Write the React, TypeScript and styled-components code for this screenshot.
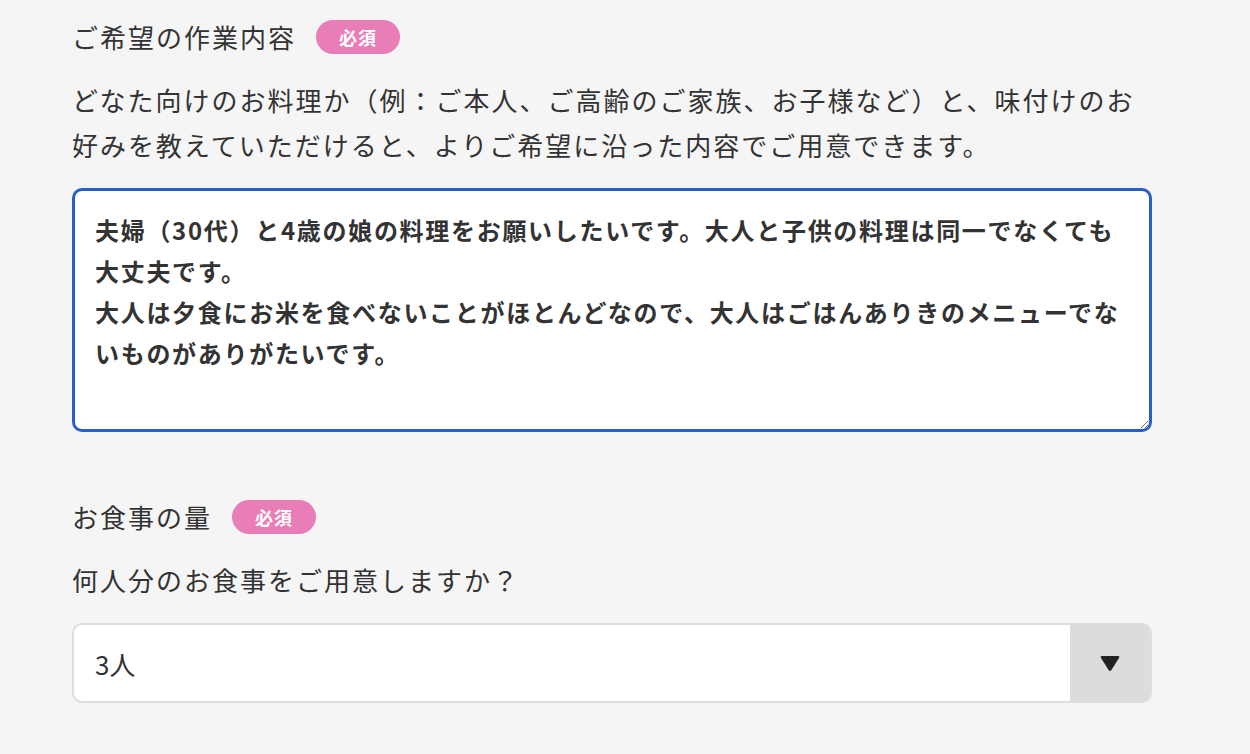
import { createGlobalStyle } from "styled-components";
import styled from "styled-components";

const GlobalStyle = createGlobalStyle`
    html, body {
        margin: 0;
        padding: 0;
        background: #f5f5f5;
    }
    body {
        font-family: "Noto Sans CJK JP", "Noto Sans", sans-serif;
        color: #333;
    }
`;

const Page = styled.div`
    padding: 20px 0 0 72px;
    width: 1080px;
    min-height: 734px;
`;

const Field = styled.section`
    display: flex;
    flex-direction: column;

    & + & {
        margin-top: 68px;
    }
`;

const LabelRow = styled.div`
    display: flex;
    align-items: center;
    gap: 20px;
    height: 34px;
`;

const Label = styled.h2`
    margin: 0;
    font-size: 26px;
    font-weight: 400;
    letter-spacing: 2px;
    line-height: 34px;
    color: #333;
`;

const Badge = styled.span`
    display: inline-flex;
    align-items: center;
    justify-content: center;
    width: 84px;
    height: 34px;
    border-radius: 17px;
    background: #e87db7;
    color: #fff;
    font-size: 18px;
    font-weight: 700;
    letter-spacing: 1px;
`;

const Description = styled.p`
    margin: 23px 0 21px;
    font-size: 26px;
    letter-spacing: 2px;
    line-height: 45px;
    color: #333;
`;

const TextArea = styled.textarea`
    box-sizing: border-box;
    width: 1080px;
    height: 244px;
    margin: 0;
    padding: 18px 20px;
    border: 3px solid #2a5ec6;
    border-radius: 10px;
    background: #fff;
    font-family: "Noto Sans CJK JP", "Noto Sans", sans-serif;
    font-size: 24px;
    font-weight: 700;
    letter-spacing: 1.7px;
    line-height: 41px;
    color: #333;
    outline: none;
    resize: vertical;
`;

const SelectBox = styled.div`
    box-sizing: border-box;
    display: flex;
    width: 1080px;
    height: 80px;
    border: 2px solid #dedede;
    border-radius: 10px;
    overflow: hidden;
    background: #fff;
`;

const Select = styled.select`
    flex: 1;
    appearance: none;
    border: none;
    outline: none;
    background: transparent;
    padding: 0 21px;
    font-family: "Noto Sans CJK JP", "Noto Sans", sans-serif;
    font-size: 26px;
    color: #333;
`;

const ArrowCell = styled.div`
    display: flex;
    align-items: center;
    justify-content: center;
    width: 80px;
    background: #dcdcdc;
`;

const DESCRIPTION =
    "どなた向けのお料理か（例：ご本人、ご高齢のご家族、お子様など）と、味付けのお好みを教えていただけると、よりご希望に沿った内容でご用意できます。";

const REQUEST =
    "夫婦（30代）と4歳の娘の料理をお願いしたいです。大人と子供の料理は同一でなくても大丈夫です。\n大人は夕食にお米を食べないことがほとんどなので、大人はごはんありきのメニューでないものがありがたいです。";

export default function App() {
    return (
        <>
            <GlobalStyle />
            <Page>
                <Field>
                    <LabelRow>
                        <Label>ご希望の作業内容</Label>
                        <Badge>必須</Badge>
                    </LabelRow>
                    <Description>{DESCRIPTION}</Description>
                    <TextArea defaultValue={REQUEST} />
                </Field>
                <Field>
                    <LabelRow>
                        <Label>お食事の量</Label>
                        <Badge>必須</Badge>
                    </LabelRow>
                    <Description>何人分のお食事をご用意しますか？</Description>
                    <SelectBox>
                        <Select defaultValue="3">
                            {[1, 2, 3, 4, 5, 6].map((n) => (
                                <option key={n} value={String(n)}>
                                    {n}人
                                </option>
                            ))}
                        </Select>
                        <ArrowCell>
                            <svg width="22" height="18" viewBox="0 0 22 18">
                                <path
                                    d="M3 2 H19 Q21 2 20 4 L12.4 16 Q11 18 9.6 16 L2 4 Q1 2 3 2 Z"
                                    fill="#222"
                                />
                            </svg>
                        </ArrowCell>
                    </SelectBox>
                </Field>
            </Page>
        </>
    );
}
